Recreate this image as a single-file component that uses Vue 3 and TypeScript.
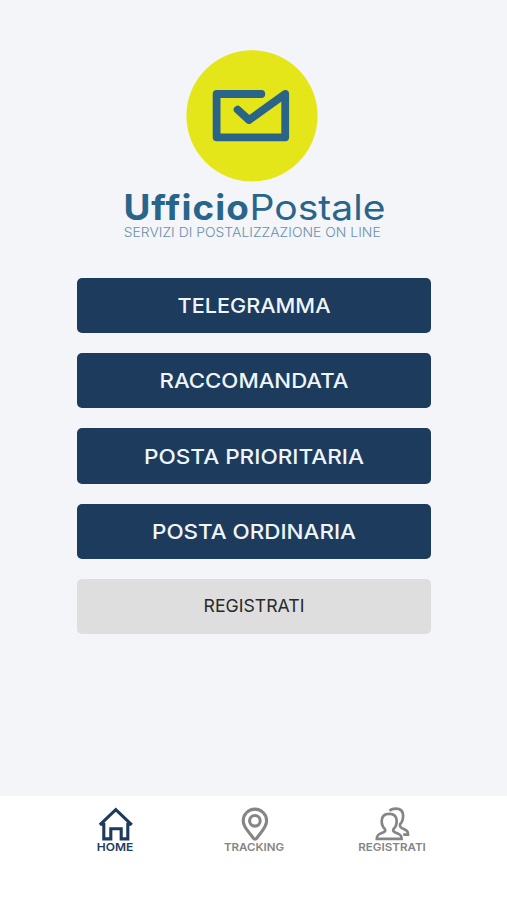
<script setup lang="ts">
import { ref } from 'vue'

type TabId = 'home' | 'tracking' | 'register'

interface Service {
  label: string
  width: number
}

const services: Service[] = [
  { label: 'TELEGRAMMA', width: 153 },
  { label: 'RACCOMANDATA', width: 189 },
  { label: 'POSTA PRIORITARIA', width: 220 },
  { label: 'POSTA ORDINARIA', width: 204 },
]

const tabs: { id: TabId; label: string; width: number }[] = [
  { id: 'home', label: 'HOME', width: 36.5 },
  { id: 'tracking', label: 'TRACKING', width: 60 },
  { id: 'register', label: 'REGISTRATI', width: 67.5 },
]

const active = ref<TabId>('home')
</script>

<template>
  <div class="screen">
    <main class="content">
      <header class="brand">
        <svg class="emblem" viewBox="0 0 132 132" aria-hidden="true">
          <circle cx="66" cy="65.8" r="65.6" fill="#e5e619" />
          <path d="M75.3 44H30.6v43.3h68.6V44L63 70 51.6 59.6" fill="none" stroke="#2a6488" stroke-width="7.8" stroke-linecap="round" stroke-linejoin="round" />
        </svg>
        <svg class="wordmark" viewBox="0 0 270 56">
          <text class="name bold" x="3.4" y="37.7" textLength="126.5" lengthAdjust="spacingAndGlyphs">Ufficio</text>
          <text class="name" x="129.5" y="37.7" textLength="136" lengthAdjust="spacingAndGlyphs">Postale</text>
          <text class="tagline" x="3.7" y="54.8" textLength="257" lengthAdjust="spacingAndGlyphs">SERVIZI DI POSTALIZZAZIONE ON LINE</text>
        </svg>
      </header>

      <div class="actions">
        <button v-for="service in services" :key="service.label" class="action" type="button">
          <svg class="caption" viewBox="0 0 354 55">
            <text x="177" y="35" text-anchor="middle" :textLength="service.width" lengthAdjust="spacingAndGlyphs">{{ service.label }}</text>
          </svg>
        </button>
        <button class="action secondary" type="button">
          <svg class="caption" viewBox="0 0 354 55">
            <text x="177" y="33.4" text-anchor="middle" textLength="101" lengthAdjust="spacingAndGlyphs">REGISTRATI</text>
          </svg>
        </button>
      </div>
    </main>

    <nav class="tabs">
      <button v-for="tab in tabs" :key="tab.id" class="tab" :class="{ active: active === tab.id }" type="button" @click="active = tab.id">
        <svg v-if="tab.id === 'home'" class="icon" viewBox="0 0 36 36" aria-hidden="true">
          <path d="M2.8 18.8 18.8 3.6l16 15.2M3.2 18.2h3.6v14.7h7V22.7h10.4v10.2h6.6V18.2h3.6" />
        </svg>
        <svg v-else-if="tab.id === 'tracking'" class="icon" viewBox="0 0 36 36" aria-hidden="true">
          <path d="M17.3 32.2C13.5 26.3 7.2 21.7 7.2 14.8a11.7 11.7 0 0 1 23.4 0c0 6.9-6 11.5-9.8 17.4-.8 1.2-2.7 1.2-3.5 0Z" />
          <circle cx="18.9" cy="14.8" r="5.3" />
        </svg>
        <svg v-else class="icon people" viewBox="0 0 36 36" aria-hidden="true">
          <path d="M2.8 32.8c0-3.2.9-4.2 4.4-5.5 3.6-1.4 4.6-2.4 3.7-4.2-2.3-2-3.2-4.5-3.2-8 0-4.8 2.9-7.3 7.5-7.3s7.5 2.5 7.5 7.3c0 3.5-.9 6-3.2 8-.9 1.8.1 2.8 3.7 4.2 3.5 1.3 4.4 2.3 4.4 5.5Z" />
          <path d="M15.6 4.8c1.3-1.5 3.3-2.2 6-2.2 4.8 0 7.5 2.6 7.5 7 0 3.9-.7 6.4-2.9 8.5-.8 2.5.2 3.6 3.5 5 3.3 1.4 4.3 2.1 4.3 5.5h-4.8" />
        </svg>
        <svg class="tab-label" viewBox="0 0 80 12">
          <text x="40" y="10" text-anchor="middle" :textLength="tab.width" lengthAdjust="spacingAndGlyphs">{{ tab.label }}</text>
        </svg>
      </button>
    </nav>
  </div>
</template>

<style>
body {
  background: #f3f5f8;
}
</style>

<style scoped>
.screen {
  display: flex;
  flex-direction: column;
  height: 900px;
  overflow: hidden;
  background: #f3f5f8;
  font-family: Inter, 'Open Sans', sans-serif;
}

.content {
  flex: 1;
  display: flex;
  flex-direction: column;
  align-items: center;
  padding-top: 50px;
}

.brand {
  display: flex;
  flex-direction: column;
  align-items: center;
  width: 270px;
}

.emblem {
  width: 132px;
  height: 132px;
  margin-right: 3px;
}

.wordmark {
  width: 270px;
  height: 56px;
  margin-right: -2px;
  overflow: visible;
}

.name {
  fill: #29658b;
  font-size: 35px;
  font-variant-ligatures: none;
}

.bold {
  font-weight: 700;
  letter-spacing: 1px;
}

.tagline {
  fill: #6b90a9;
  font-size: 13.2px;
  font-weight: 300;
}

.actions {
  display: flex;
  flex-direction: column;
  gap: 20px;
  width: 354px;
  margin-top: 39.6px;
  margin-left: 1px;
}

.action {
  display: block;
  height: 55.4px;
  padding: 0;
  border: 0;
  border-radius: 5px;
  background: #1d3b5c;
  font-family: inherit;
  cursor: pointer;
}

.caption {
  display: block;
  width: 354px;
  height: 55px;
  fill: #eff5fb;
  font-size: 20px;
  font-weight: 500;
}

.secondary {
  height: 55px;
  background: #dedede;
}

.secondary .caption {
  fill: #292929;
  font-size: 17.6px;
  font-weight: 400;
}

.tabs {
  display: grid;
  grid-template-columns: repeat(3, 138.5px);
  justify-content: center;
  height: 104px;
  background: #fff;
}

.tab {
  display: flex;
  flex-direction: column;
  align-items: center;
  padding: 10px 0 0;
  border: 0;
  background: none;
  color: #858585;
  font-family: inherit;
  cursor: pointer;
}

.tab.active {
  color: #1d3b5c;
}

.icon {
  width: 36px;
  height: 36px;
  fill: none;
  stroke: currentColor;
  stroke-width: 3.1;
}

.icon.people {
  stroke-width: 2.7;
}

.tab-label {
  width: 80px;
  height: 12px;
  margin-top: -1px;
  fill: currentColor;
  font-size: 11px;
  font-weight: 600;
}
</style>
